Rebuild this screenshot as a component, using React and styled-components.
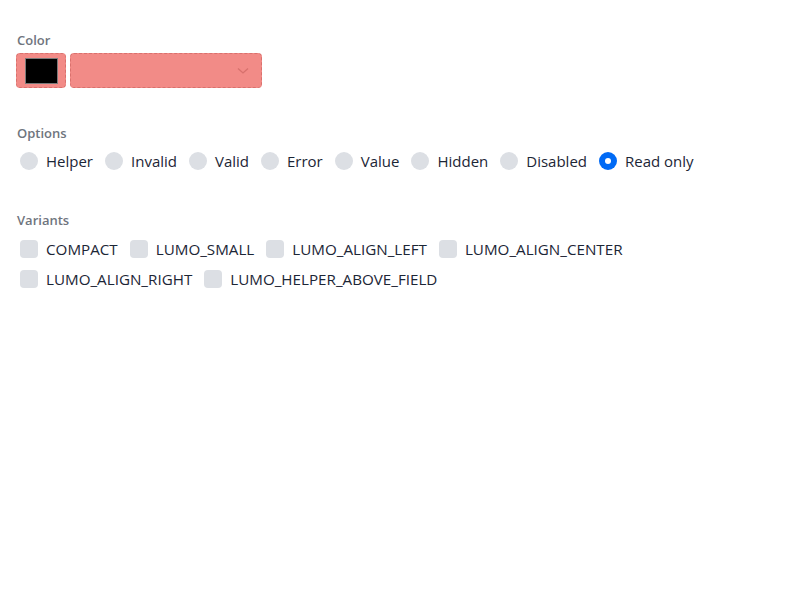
import React from "react";
import styled, { createGlobalStyle } from "styled-components";

const Global = createGlobalStyle`
  body {
    margin: 0;
    background: #ffffff;
    font-family: "Segoe UI", "Open Sans", "Liberation Sans", sans-serif;
    -webkit-font-smoothing: antialiased;
  }
`;

const Page = styled.div`
  padding: 30px 16px;
  display: flex;
  flex-direction: column;
`;

const Section = styled.div`
  display: flex;
  flex-direction: column;
  margin-bottom: ${(p) => p.gapBelow || 0}px;
`;

const Label = styled.div`
  font-size: 13px;
  font-weight: 600;
  color: #6f757e;
  line-height: 20px;
  padding-left: 1px;
  margin-bottom: ${(p) => p.space || 0}px;
`;

const FieldRow = styled.div`
  display: flex;
  gap: 4px;
`;

const ErrorBox = styled.div`
  height: 35px;
  width: ${(p) => p.w}px;
  box-sizing: border-box;
  background: #f28b87;
  border: 1px dashed #d9716d;
  border-radius: 4px;
  display: flex;
  align-items: center;
  justify-content: ${(p) => p.justify || "center"};
  padding-right: ${(p) => p.padRight || 0}px;
`;

const Swatch = styled.div`
  width: 33px;
  height: 26px;
  box-sizing: border-box;
  background: #000;
  border: 1px solid #7a7a7a;
`;

const Chevron = styled.svg`
  width: 12px;
  height: 8px;
  display: block;
`;

const Options = styled.div`
  display: flex;
  align-items: center;
  padding-left: 4px;
  gap: 12px;
  height: 28px;
`;

const Item = styled.label`
  display: flex;
  align-items: center;
  gap: 8px;
  font-size: 15px;
  color: #1c2636;
  line-height: 20px;
  white-space: nowrap;
`;

const Radio = styled.span`
  width: 18px;
  height: 18px;
  border-radius: 50%;
  box-sizing: border-box;
  background: ${(p) => (p.checked ? "#006af5" : "#dcdfe4")};
  display: flex;
  align-items: center;
  justify-content: center;
  &::after {
    content: "";
    width: 6px;
    height: 6px;
    border-radius: 50%;
    background: #fff;
    display: ${(p) => (p.checked ? "block" : "none")};
  }
`;

const Checks = styled.div`
  display: flex;
  flex-wrap: wrap;
  padding-left: 4px;
  column-gap: 12px;
  row-gap: 10px;
  width: 640px;
`;

const CheckItem = styled(Item)`
  height: 20px;
  font-size: 15.2px;
`;

const Box = styled.span`
  width: 18px;
  height: 18px;
  border-radius: 4px;
  background: #dcdfe4;
`;

const radios = ["Helper", "Invalid", "Valid", "Error", "Value", "Hidden", "Disabled", "Read only"];
const variants = [
  "COMPACT",
  "LUMO_SMALL",
  "LUMO_ALIGN_LEFT",
  "LUMO_ALIGN_CENTER",
  "LUMO_ALIGN_RIGHT",
  "LUMO_HELPER_ABOVE_FIELD",
];

export default function App() {
  return (
    <>
      <Global />
      <Page>
        <Section gapBelow={35}>
          <Label space={3}>Color</Label>
          <FieldRow>
            <ErrorBox w={50}>
              <Swatch />
            </ErrorBox>
            <ErrorBox w={192} justify="flex-end" padRight={12}>
              <Chevron viewBox="0 0 12 8">
                <path d="M1 1.5 L6 6 L11 1.5" fill="none" stroke="#d7716d" strokeWidth="1.3" />
              </Chevron>
            </ErrorBox>
          </FieldRow>
        </Section>

        <Section gapBelow={35}>
          <Label space={4}>Options</Label>
          <Options>
            {radios.map((r) => (
              <Item key={r}>
                <Radio checked={r === "Read only"} />
                {r}
              </Item>
            ))}
          </Options>
        </Section>

        <Section>
          <Label space={9}>Variants</Label>
          <Checks>
            {variants.map((v) => (
              <CheckItem key={v}>
                <Box />
                {v}
              </CheckItem>
            ))}
          </Checks>
        </Section>
      </Page>
    </>
  );
}
